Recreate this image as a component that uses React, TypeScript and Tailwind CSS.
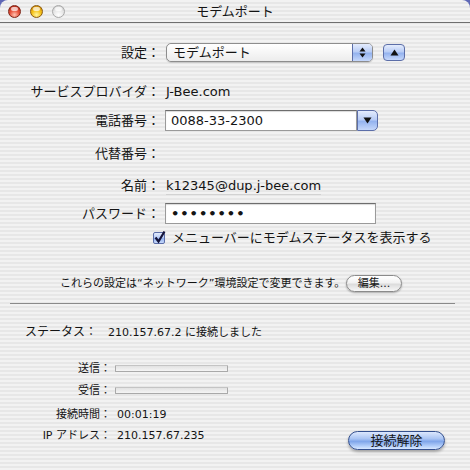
import React from 'react'

const Light: React.FC<{ tone: 'red' | 'yellow' | 'gray' }> = ({ tone }) => {
  const fill =
    tone === 'red'
      ? 'bg-[radial-gradient(circle_at_50%_80%,#ffc2b0_0%,#e8533c_45%,#a8210f_100%)] border-[#7e2416]'
      : tone === 'yellow'
        ? 'bg-[radial-gradient(circle_at_50%_80%,#fff6a0_0%,#f5c21a_45%,#c27a05_100%)] border-[#8a5a10]'
        : 'bg-[radial-gradient(circle_at_50%_80%,#ffffff_0%,#e6e6e6_50%,#c4c4c4_100%)] border-[#a8a8a8]'
  return (
    <div className={`relative h-[13px] w-[13px] rounded-full border ${fill}`}>
      <div className="mx-auto mt-[1px] h-[4px] w-[7px] rounded-full bg-white/70" />
    </div>
  )
}

const UpDown = () => (
  <svg width="7" height="11" viewBox="0 0 7 11">
    <path d="M3.5 0.5 L6.5 4.5 L0.5 4.5 Z" fill="#111" />
    <path d="M3.5 10.5 L6.5 6.5 L0.5 6.5 Z" fill="#111" />
  </svg>
)

const Tri: React.FC<{ down?: boolean }> = ({ down }) => (
  <svg width="9" height="7" viewBox="0 0 9 7">
    {down ? <path d="M0.5 0.5 L8.5 0.5 L4.5 6.5 Z" fill="#111" /> : <path d="M4.5 0.5 L8.5 6.5 L0.5 6.5 Z" fill="#111" />}
  </svg>
)

const aquaBlue =
  'bg-[linear-gradient(180deg,#e4ecfd_0%,#b9cdf6_45%,#94b3ef_55%,#c6d8fb_100%)] border-[#5c6ea8]'

const Label: React.FC<{ children: React.ReactNode }> = ({ children }) => (
  <div className="w-[160px] shrink-0 text-right text-[13px] leading-none whitespace-nowrap">{children}</div>
)

const SmallLabel: React.FC<{ children: React.ReactNode }> = ({ children }) => (
  <div className="w-[111px] shrink-0 text-right text-[11px] leading-none whitespace-nowrap">{children}</div>
)

export default function App() {
  return (
    <div className="h-[470px] w-[470px] overflow-hidden bg-[#5f68b6] font-['DejaVu_Sans','Noto_Sans_CJK_JP',sans-serif] text-[#141414]">
      <div className="flex h-full flex-col rounded-t-[8px] bg-[repeating-linear-gradient(180deg,#f2f2f2_0px,#f2f2f2_2px,#e7e7e7_2px,#e7e7e7_4px)]">
        {/* title bar */}
        <div className="grid h-[23px] shrink-0 grid-cols-[80px_1fr_80px] items-center border-b border-[#6f6f6f]">
          <div className="flex items-center gap-[9px] pl-[8px]">
            <Light tone="red" />
            <Light tone="yellow" />
            <Light tone="gray" />
          </div>
          <div className="text-center text-[13px] leading-none">モデムポート</div>
          <div />
        </div>

        {/* settings */}
        <div className="mt-[20px] flex h-[19px] items-center">
          <Label>設定：</Label>
          <div className="ml-[6px] flex h-[19px] w-[207px] items-stretch rounded-[5px] border border-[#8d8d8d] shadow-[0_1px_1px_rgba(0,0,0,0.15)]">
            <div className="flex flex-1 items-center rounded-l-[5px] bg-[linear-gradient(180deg,#ffffff,#f6f6f6_50%,#ececec)] pl-[6px] text-[13px] leading-none">
              モデムポート
            </div>
            <div className={`flex w-[20px] items-center justify-center rounded-r-[4px] border-l ${aquaBlue}`}>
              <UpDown />
            </div>
          </div>
          <div className={`ml-[10px] flex h-[17px] w-[22px] items-center justify-center rounded-[4px] border ${aquaBlue}`}>
            <Tri />
          </div>
        </div>

        <div className="mt-[19px] flex h-[20px] items-center">
          <Label>サービスプロバイダ：</Label>
          <div className="ml-[6px] text-[13px] leading-none">J-Bee.com</div>
        </div>

        <div className="mt-[9px] flex h-[21px] items-center">
          <Label>電話番号：</Label>
          <div className="ml-[5px] flex h-[21px] w-[213px] items-stretch">
            <div className="flex flex-1 items-center border border-[#9a9a9a] border-t-[#6d6d6d] bg-white pl-[5px] text-[13px] leading-none shadow-[inset_0_1px_1px_rgba(0,0,0,0.15)]">
              0088-33-2300
            </div>
            <div className={`flex w-[21px] items-center justify-center rounded-r-[5px] border ${aquaBlue}`}>
              <Tri down />
            </div>
          </div>
        </div>

        <div className="mt-[12px] flex h-[20px] items-center">
          <Label>代替番号：</Label>
        </div>

        <div className="mt-[12px] flex h-[20px] items-center">
          <Label>名前：</Label>
          <div className="ml-[6px] flex h-[20px] w-[155px] items-center border-b border-[#d2d2d2] pt-[1px] text-[13px] leading-none whitespace-nowrap">
            k12345@dup.j-bee.com
          </div>
        </div>

        <div className="mt-[8px] flex h-[21px] items-center">
          <Label>パスワード：</Label>
          <div className="ml-[5px] flex h-[21px] w-[211px] items-center border border-[#9a9a9a] border-t-[#6d6d6d] bg-white pl-[5px] text-[13px] font-bold leading-none tracking-[1px] shadow-[inset_0_1px_1px_rgba(0,0,0,0.15)]">
            ••••••••
          </div>
        </div>

        <div className="mt-[6px] flex h-[15px] items-center pl-[153px]">
          <div className={`relative h-[12px] w-[12px] rounded-[2px] border ${aquaBlue}`}>
            <svg width="14" height="14" viewBox="0 0 14 14" className="-ml-[1px] -mt-[3px]">
              <path d="M2.5 7.5 L5.5 11.5 L11.5 1.5" fill="none" stroke="#14143a" strokeWidth="2.2" />
            </svg>
          </div>
          <div className="ml-[7px] text-[13px] leading-none whitespace-nowrap">メニューバーにモデムステータスを表示する</div>
        </div>

        <div className="mt-[30px] flex h-[17px] items-center pl-[60px]">
          <div className="w-[286px] text-[11px] leading-none whitespace-nowrap">
            これらの設定は“ネットワーク”環境設定で変更できます。
          </div>
          <div className="flex h-[17px] w-[56px] items-center justify-center rounded-full border border-[#8a8a8a] bg-[linear-gradient(180deg,#ffffff_0%,#f2f2f2_45%,#dcdcdc_55%,#f7f7f7_100%)] text-[11px] leading-none shadow-[0_1px_2px_rgba(0,0,0,0.3)]">
            編集...
          </div>
        </div>

        <div className="mt-[11px] ml-[10px] mr-[15px] h-px bg-[#8a8a8a]" />

        {/* status */}
        <div className="mt-[18px] flex h-[20px] items-center">
          <div className="w-[97px] shrink-0 text-right text-[12px] leading-none">ステータス：</div>
          <div className="ml-[11px] text-[11px] leading-none whitespace-nowrap">210.157.67.2 に接続しました</div>
        </div>

        <div className="mt-[18px] flex h-[16px] items-center">
          <SmallLabel>送信：</SmallLabel>
          <div className="ml-[4px] h-[7px] w-[113px] rounded-[1px] border border-[#a9a9a9] border-t-[#c4c4c4] bg-[linear-gradient(180deg,#e2e2e2,#f5f5f5)]" />
        </div>

        <div className="mt-[6px] flex h-[16px] items-center">
          <SmallLabel>受信：</SmallLabel>
          <div className="ml-[4px] h-[7px] w-[113px] rounded-[1px] border border-[#a9a9a9] border-t-[#c4c4c4] bg-[linear-gradient(180deg,#e2e2e2,#f5f5f5)]" />
        </div>

        <div className="mt-[8px] flex h-[16px] items-center">
          <SmallLabel>接続時間：</SmallLabel>
          <div className="ml-[6px] text-[11px] leading-none">00:01:19</div>
        </div>

        <div className="mt-[5px] flex items-start pr-[25px]">
          <div className="flex h-[16px] items-center">
            <SmallLabel>IP アドレス：</SmallLabel>
            <div className="ml-[6px] text-[11px] leading-none">210.157.67.235</div>
          </div>
          <div className="ml-auto mt-[4px] flex h-[19px] w-[97px] items-center justify-center rounded-full border border-[#34508e] bg-[linear-gradient(180deg,#dce8fd_0%,#a9c4f3_40%,#7fa5ea_55%,#b8d2fb_85%,#d9e8ff_100%)] text-[13px] leading-none shadow-[0_2px_3px_rgba(0,0,0,0.3)]">
            接続解除
          </div>
        </div>
      </div>
    </div>
  )
}
